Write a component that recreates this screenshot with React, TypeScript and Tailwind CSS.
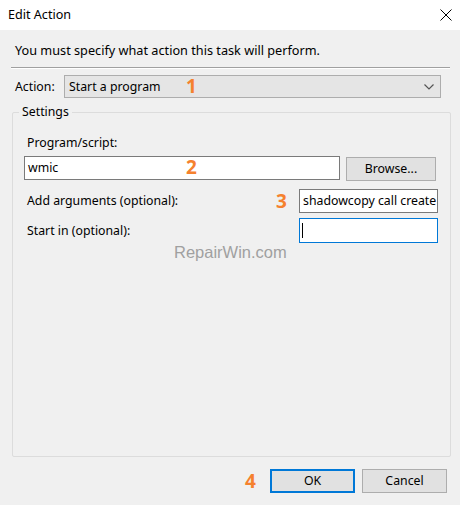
import React from "react";

export default function App() {
  return (
    <div className="relative w-[460px] h-[505px] bg-[#f0f0f0] flex flex-col font-['Segoe_UI','Noto_Sans',sans-serif] text-[12.3px] text-black overflow-hidden">
      {/* Title bar */}
      <div className="h-[30px] bg-white flex items-center justify-between pl-[8px] pr-[7px] shrink-0">
        <span className="leading-[16px] text-[12.6px]">Edit Action</span>
        <svg width="12" height="12" viewBox="0 0 12 12" className="mr-[1px]">
          <path d="M0.5 0.5 L11.5 11.5 M11.5 0.5 L0.5 11.5" stroke="#000" strokeWidth="1" fill="none" />
        </svg>
      </div>

      <div className="pl-[11px] pr-[10px] flex flex-col">
        <div className="pl-[4px] mt-[12px] leading-[16px] text-[12.7px]">You must specify what action this task will perform.</div>
        <div className="mt-[9px] border-t border-[#a0a0a0] border-b border-b-white h-[2px]" />

        {/* Action row */}
        <div className="mt-[6px] flex items-center">
          <span className="pl-[4px] w-[53px] leading-[16px]">Action:</span>
          <div className="relative w-[377px] h-[23px] border border-[#adadad] bg-[#e5e5e5] flex items-center justify-between pl-[4px] pr-[6px]">
            <span className="leading-[16px]">Start a program</span>
            <svg width="10" height="6" viewBox="0 0 10 6">
              <path d="M0.5 0.5 L5 5 L9.5 0.5" stroke="#555" strokeWidth="1.2" fill="none" />
            </svg>
            <span className="absolute left-[121px] top-[-1px] text-[19px] leading-[22px] font-bold text-[#f5812e] font-['Open_Sans',sans-serif]">1</span>
          </div>
        </div>

        {/* Settings groupbox */}
        <div className="relative mt-[14px] ml-[1px] w-[439px] h-[345px] border border-[#dcdcdc] rounded-[2px]">
          <span className="absolute left-[6px] top-[-9px] px-[3px] bg-[#f0f0f0] leading-[16px]">Settings</span>

          <div className="pl-[11px] pt-[22px] flex flex-col">
            <div className="pl-[3px] leading-[16px]">Program/script:</div>
            <div className="mt-[5px] flex items-start">
              <div className="relative w-[316px] h-[24px] border border-[#7a7a7a] bg-white flex items-center pl-[3px]">
                <span className="leading-[16px]">wmic</span>
                <span className="absolute left-[161px] top-[-1px] text-[19px] leading-[22px] font-bold text-[#f5812e] font-['Open_Sans',sans-serif]">2</span>
              </div>
              <button className="ml-[6px] mt-[1px] w-[90px] h-[24px] border border-[#adadad] bg-[#e1e1e1] leading-[16px]">Browse...</button>
            </div>

            <div className="mt-[8px] flex items-center h-[24px]">
              <span className="pl-[3px] w-[252px] leading-[16px]">Add arguments (optional):</span>
              <span className="w-[23px] text-[19px] leading-[22px] font-bold text-[#f5812e] font-['Open_Sans',sans-serif]">3</span>
              <div className="w-[139px] h-[24px] border border-[#7a7a7a] bg-white flex items-center pl-[3px] overflow-hidden whitespace-nowrap">
                <span className="leading-[16px]">shadowcopy call create Volume</span>
              </div>
            </div>

            <div className="mt-[5px] flex items-center h-[25px]">
              <span className="pl-[3px] w-[275px] leading-[16px]">Start in (optional):</span>
              <div className="w-[139px] h-[25px] border border-[#0078d7] bg-white flex items-center pl-[2px]">
                <div className="w-[1px] h-[15px] bg-black" />
              </div>
            </div>
          </div>
        </div>

        {/* Buttons */}
        <div className="mt-[12px] flex items-center pl-[234px]">
          <span className="w-[25px] text-[19px] leading-[22px] font-bold text-[#f5812e] font-['Open_Sans',sans-serif]">4</span>
          <button className="w-[85px] h-[24px] border-2 border-[#0078d7] bg-[#e1e1e1] leading-[16px]">OK</button>
          <button className="ml-[7px] w-[85px] h-[24px] border border-[#adadad] bg-[#e1e1e1] leading-[16px]">Cancel</button>
        </div>
      </div>

      {/* Watermark */}
      <span className="absolute left-[174px] top-[241px] text-[16.5px] leading-[22px] text-[#a0a0a0] font-['Liberation_Sans',sans-serif]">RepairWin.com</span>
    </div>
  );
}
